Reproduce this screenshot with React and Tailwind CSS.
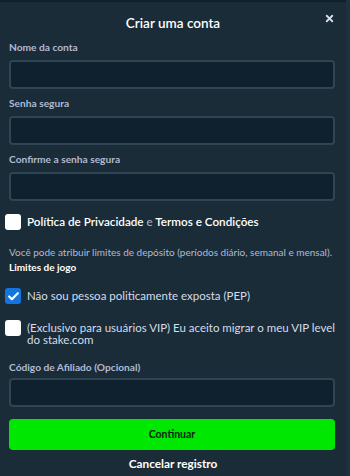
import { X, Check } from "lucide-react";

function Field({ label, top, gap = "mt-[6px]" }) {
  return (
    <div className={top}>
      <label className="block text-[10.2px] font-bold text-[#b1bad3] leading-[13px] pl-[9px]">
        {label}
      </label>
      <div className={`${gap} ml-[9px] h-[29px] w-[326px] rounded-[4px] border-2 border-[#2f4553] bg-[#0f212e]`} />
    </div>
  );
}

function Box({ checked }) {
  return checked ? (
    <span className="flex h-[16px] w-[16px] shrink-0 items-center justify-center rounded-[3px] bg-[#1475e1]">
      <Check size={13} strokeWidth={4} className="text-white" />
    </span>
  ) : (
    <span className="block h-[16px] w-[16px] shrink-0 rounded-[3px] bg-white" />
  );
}

export default function App() {
  return (
    <div
      className="flex h-[476px] w-[350px] bg-[#1a2c38] overflow-hidden"
      style={{ fontFamily: "Lato, 'Noto Sans', sans-serif" }}
    >
      <div className="flex-1 flex flex-col">
        <div className="h-[2px] bg-[#0f212e]" />
        <div className="relative flex h-[39px] items-center justify-center">
          <h2 className="mt-[3px] text-[13.5px] font-semibold text-white">Criar uma conta</h2>
          <button className="absolute right-[11px] top-[11px] text-[#d5dceb]">
            <X size={11} strokeWidth={4} />
          </button>
        </div>

        <Field label="Nome da conta" top="mt-0" />
        <Field label="Senha segura" top="mt-[8px]" />
        <Field label="Confirme a senha segura" top="mt-[8px]" />

        <div className="mt-[13px] flex h-[16px] items-center gap-[6px] pl-[5px]">
          <Box />
          <span className="text-[11.7px] font-semibold text-white whitespace-nowrap">
            Política de Privacidade <span className="font-normal text-[#b1bad3]">e</span> Termos e Condições
          </span>
        </div>

        <p className="mt-[15px] pl-[9px] text-[10px] leading-[14px] text-[#b1bad3] whitespace-nowrap">
          Você pode atribuir limites de depósito (períodos diário, semanal e mensal).
        </p>
        <p className="mt-[1px] pl-[9px] text-[10px] font-bold leading-[14px] text-white">
          Limites de jogo
        </p>

        <div className="mt-[14px] flex h-[16px] items-center gap-[6px] pl-[5px]">
          <Box checked />
          <span className="text-[11.5px] text-[#d5dceb] whitespace-nowrap">
            Não sou pessoa politicamente exposta (PEP)
          </span>
        </div>

        <div className="mt-[16px] flex items-start gap-[6px] pl-[5px] pr-[8px]">
          <Box />
          <span className="mt-[2px] text-[11.5px] leading-[12px] text-[#d5dceb]">
            (Exclusivo para usuários VIP) Eu aceito migrar o meu VIP level do stake.com
          </span>
        </div>

        <Field label="Código de Afiliado (Opcional)" top="mt-[15px]" gap="mt-[4px]" />

        <button className="mt-[12px] ml-[9px] h-[31px] w-[326px] rounded-[4px] bg-[#00e701] text-[10.5px] font-bold text-[#05250a]">
          Continuar
        </button>
        <button className="mt-[6px] text-[11.8px] font-bold leading-[16px] text-white">
          Cancelar registro
        </button>
      </div>
      <div className="w-[4px] bg-[#1e323e]" />
    </div>
  );
}
